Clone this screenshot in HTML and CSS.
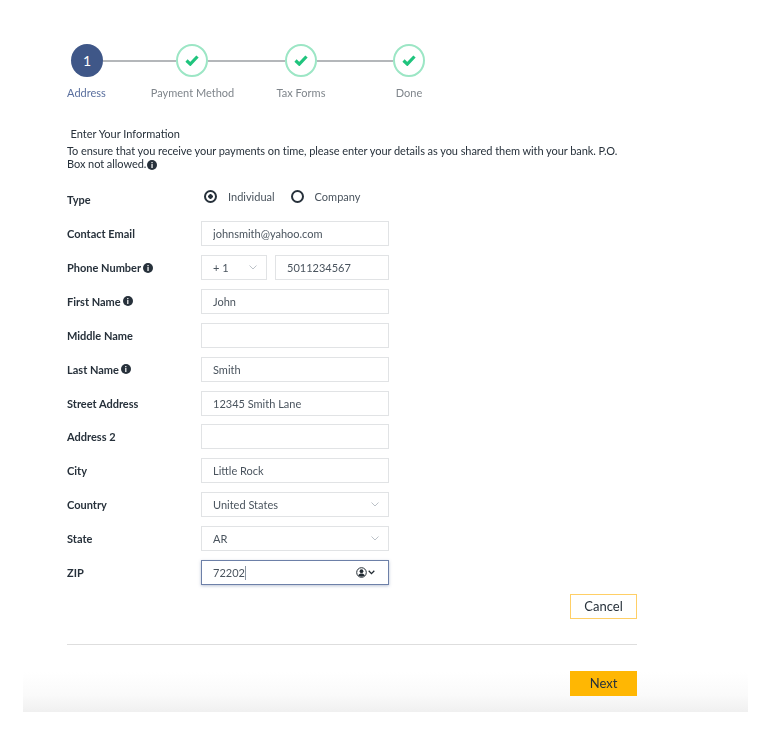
FILE: index.html
```html
<!DOCTYPE html>
<html lang="en">
<head>
  <meta charset="UTF-8">
  <meta name="viewport" content="width=device-width, initial-scale=1.0">
  <title>Enter Your Information</title>
  <link rel="stylesheet" href="styles.css">
</head>
<body>
  <div class="page">
    <div class="stepper">
      <div class="track">
        <div class="circle current">1</div>
        <div class="line line-a"></div>
        <div class="circle done"><svg width="14" height="11" viewBox="0 0 14 11"><path d="M1.5 5.5l3.8 3.6 7.2-7.6" fill="none" stroke="#1fc47d" stroke-width="3.2"/></svg></div>
        <div class="line line-b"></div>
        <div class="circle done"><svg width="14" height="11" viewBox="0 0 14 11"><path d="M1.5 5.5l3.8 3.6 7.2-7.6" fill="none" stroke="#1fc47d" stroke-width="3.2"/></svg></div>
        <div class="line line-c"></div>
        <div class="circle done"><svg width="14" height="11" viewBox="0 0 14 11"><path d="M1.5 5.5l3.8 3.6 7.2-7.6" fill="none" stroke="#1fc47d" stroke-width="3.2"/></svg></div>
      </div>
      <div class="step-labels">
        <span class="active">Address</span>
        <span>Payment Method</span>
        <span>Tax Forms</span>
        <span>Done</span>
      </div>
    </div>

    <h2 class="title">Enter Your Information</h2>
    <p class="intro">To ensure that you receive your payments on time, please enter your details as you shared them with your bank. P.O. Box not allowed. <span class="info">i</span></p>

    <form class="form">
      <div class="form-row type-row">
        <label>Type</label>
        <div class="radios">
          <span class="radio checked"></span><span class="radio-text">Individual</span>
          <span class="radio"></span><span class="radio-text">Company</span>
        </div>
      </div>
      <div class="form-row">
        <label>Contact Email</label>
        <input type="text" value="johnsmith@yahoo.com">
      </div>
      <div class="form-row">
        <label>Phone Number <span class="info">i</span></label>
        <div class="phone">
          <div class="field code">+ 1
            <svg class="chev" width="8" height="5" viewBox="0 0 8 5"><path d="M.5.5L4 4 7.5.5" fill="none" stroke="#bcc2c8"/></svg>
          </div>
          <input type="text" value="5011234567">
        </div>
      </div>
      <div class="form-row">
        <label>First Name <span class="info">i</span></label>
        <input type="text" value="John">
      </div>
      <div class="form-row">
        <label>Middle Name</label>
        <input type="text">
      </div>
      <div class="form-row">
        <label>Last Name <span class="info">i</span></label>
        <input type="text" value="Smith">
      </div>
      <div class="form-row">
        <label>Street Address</label>
        <input type="text" value="12345 Smith Lane">
      </div>
      <div class="form-row">
        <label>Address 2</label>
        <input type="text">
      </div>
      <div class="form-row">
        <label>City</label>
        <input type="text" value="Little Rock">
      </div>
      <div class="form-row">
        <label>Country</label>
        <div class="field">United States
          <svg class="chev" width="8" height="5" viewBox="0 0 8 5"><path d="M.5.5L4 4 7.5.5" fill="none" stroke="#bcc2c8"/></svg>
        </div>
      </div>
      <div class="form-row">
        <label>State</label>
        <div class="field">AR
          <svg class="chev" width="8" height="5" viewBox="0 0 8 5"><path d="M.5.5L4 4 7.5.5" fill="none" stroke="#bcc2c8"/></svg>
        </div>
      </div>
      <div class="form-row">
        <label>ZIP</label>
        <div class="field focused">
          <span class="zip-text">72202</span>
          <span class="autofill">
            <svg width="11" height="11" viewBox="0 0 11 11"><circle cx="5.5" cy="5.5" r="4.8" fill="none" stroke="#222b33"/><circle cx="5.5" cy="4.2" r="1.9" fill="#222b33"/><path d="M2.2 8.6c.7-1.6 2-2.1 3.3-2.1s2.6.5 3.3 2.1c-1.8 1.5-4.8 1.5-6.6 0z" fill="#222b33"/></svg>
            <svg width="7" height="5" viewBox="0 0 7 5"><path d="M.7.8l2.8 2.8L6.3.8" fill="none" stroke="#222b33" stroke-width="1.3"/></svg>
          </span>
        </div>
      </div>
    </form>

    <div class="actions">
      <button type="button" class="btn btn-cancel">Cancel</button>
    </div>
    <hr class="divider">
    <div class="actions">
      <button type="button" class="btn btn-next">Next</button>
    </div>
  </div>
</body>
</html>
```

FILE: styles.css
```css
body {
  font-family: Lato, "Open Sans", sans-serif;
  background-color: white;
  color: #27313b;
  margin: 0;
  padding: 0;
}
.page {
  width: 725px;
  height: 712px;
  margin-left: 23px;
  padding: 44px 111px 0 44px;
  box-sizing: border-box;
  background: linear-gradient(to bottom, white 672px, #fafafa 695px, #f0f0f0 712px);
}
.stepper,
.title,
.intro,
.form,
.actions,
.divider {
  filter: blur(0.35px);
}
.track {
  display: flex;
  align-items: center;
  margin-left: 4px;
}
.circle {
  width: 32px;
  height: 33px;
  flex: none;
  box-sizing: border-box;
  border-radius: 50%;
  display: flex;
  align-items: center;
  justify-content: center;
}
.current {
  background-color: #3f5788;
  color: white;
  font-size: 14px;
}
.done {
  border: 2px solid #9ce6c5;
}
.line {
  height: 2px;
  background-color: #b4b7ba;
}
.line-a { width: 73px; }
.line-b { width: 77px; }
.line-c { width: 76px; }
.step-labels {
  display: grid;
  grid-template-columns: 107px 105px 112px 104px;
  margin: 8px 0 0 -34px;
  font-size: 11px;
  color: #7f858b;
  text-align: center;
  line-height: 16px;
}
.step-labels .active {
  color: #5a6f9e;
}
.title {
  font-size: 11px;
  font-weight: normal;
  line-height: 14px;
  margin: 26px 0 0 3.5px;
}
.intro {
  font-size: 11px;
  line-height: 13px;
  width: 560px;
  margin: 3px 0 0;
  letter-spacing: -0.06px;
}
.intro .info {
  margin-left: -2px;
}
.info {
  display: inline-flex;
  align-items: center;
  justify-content: center;
  width: 10px;
  height: 10px;
  border-radius: 50%;
  background-color: #27313b;
  color: white;
  font-size: 8px;
  font-weight: 900;
  line-height: 1;
  vertical-align: middle;
}
.form {
  margin-top: 17px;
}
.form-row {
  display: flex;
  align-items: center;
  height: 25px;
  margin-bottom: 8.9px;
}
.form-row label {
  width: 134px;
  flex: none;
  font-size: 11px;
  font-weight: 700;
  display: flex;
  align-items: center;
  gap: 2px;
}
.form-row input,
.field {
  width: 188px;
  height: 25px;
  box-sizing: border-box;
  border: 1px solid #e1e3e5;
  padding: 0 11px;
  font-family: inherit;
  font-size: 11px;
  color: #4a545e;
  background-color: white;
  outline: none;
  margin: 0;
  display: flex;
  align-items: center;
  justify-content: space-between;
}
.radios {
  display: flex;
  align-items: center;
  margin: -6px 0 0 3px;
  font-size: 11px;
  color: #4a545e;
}
.radio {
  width: 13px;
  height: 13px;
  box-sizing: border-box;
  border: 2px solid #27313b;
  border-radius: 50%;
  display: inline-block;
  margin-right: 11px;
}
.radio.checked {
  background: radial-gradient(circle, #27313b 2px, white 2.5px);
}
.radio-text {
  margin-right: 16px;
}
.phone {
  display: flex;
  gap: 8px;
}
.phone input {
  width: 114px;
}
.field.code {
  width: 66px;
}
.chev {
  margin-right: -2px;
}
.field.focused {
  border-color: #6d80a8;
  box-shadow: 0 1px 3px rgba(63, 87, 136, 0.35);
}
.zip-text {
  border-right: 1px solid #8a94a0;
  line-height: 14px;
}
.autofill {
  display: flex;
  align-items: center;
  gap: 1px;
  margin-right: 2px;
}
.actions {
  display: flex;
  justify-content: flex-end;
}
.btn {
  width: 67px;
  height: 25px;
  box-sizing: border-box;
  font-family: inherit;
  font-size: 13px;
  color: #27313b;
  cursor: pointer;
  padding: 0;
}
.btn-cancel {
  background-color: white;
  border: 1px solid #ffcf66;
}
.btn-next {
  background-color: #ffb703;
  border: none;
}
.divider {
  border: none;
  height: 1px;
  background-color: #dedede;
  margin: 25px 0 26px;
}
```
